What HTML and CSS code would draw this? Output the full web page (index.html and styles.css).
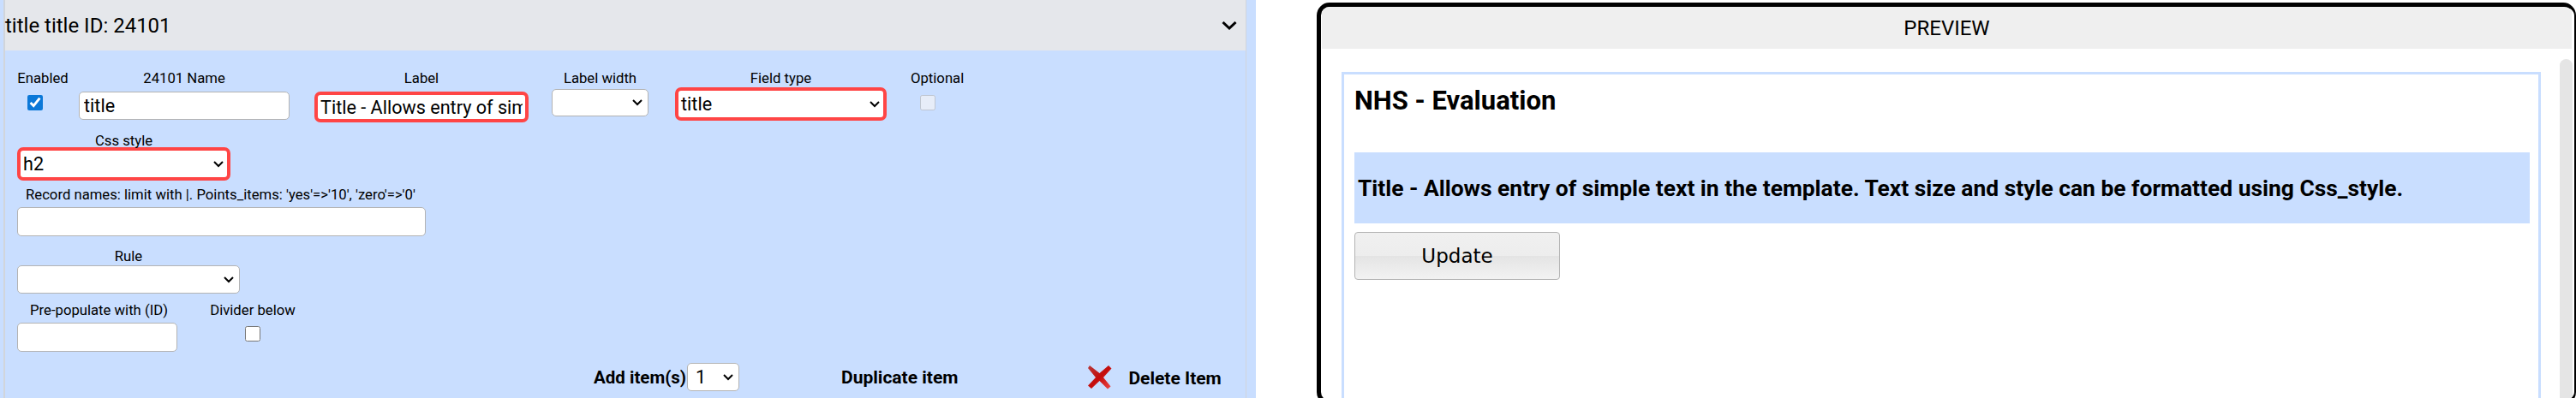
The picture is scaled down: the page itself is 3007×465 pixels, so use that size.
FILE: index.html
```html
<!DOCTYPE html>
<html lang="en">
<head>
  <meta charset="UTF-8">
  <title>Title item preview</title>
  <link rel="stylesheet" href="styles.css">
</head>
<body>
  <div class="page">
    <!-- Item editor -->
    <section class="editor">
      <div class="panel">
        <div class="editor-head">
          <span>title title ID: 24101</span>
          <svg class="head-chevron" viewBox="0 0 18 10"><path d="M1.5 1l7.5 7 7.5-7" fill="none" stroke="#000" stroke-width="3"/></svg>
        </div>
        <div class="editor-body">
          <div class="row row-first">
            <div class="field field-enabled">
              <label>Enabled</label>
              <input type="checkbox" class="check" checked>
            </div>
            <div class="field field-name">
              <label>24101 Name</label>
              <input type="text" class="box box-name" value="title">
            </div>
            <div class="field field-label">
              <label>Label</label>
              <input type="text" class="box box-label hot" value="Title - Allows entry of simple text in the template.">
            </div>
            <div class="field field-width">
              <label>Label width</label>
              <div class="box box-width pick"><span></span><svg class="chev" viewBox="0 0 12 8"><path d="M1 1l5 5 5-5" fill="none" stroke="#000" stroke-width="2"/></svg></div>
            </div>
            <div class="field field-type">
              <label>Field type</label>
              <div class="box box-type pick hot"><span>title</span><svg class="chev" viewBox="0 0 12 8"><path d="M1 1l5 5 5-5" fill="none" stroke="#000" stroke-width="2"/></svg></div>
            </div>
            <div class="field field-optional">
              <label>Optional</label>
              <input type="checkbox" class="check" disabled>
            </div>
          </div>
          <div class="field field-css">
            <label>Css style</label>
            <div class="box box-css pick hot"><span>h2</span><svg class="chev" viewBox="0 0 12 8"><path d="M1 1l5 5 5-5" fill="none" stroke="#000" stroke-width="2"/></svg></div>
          </div>
          <div class="field field-record">
            <label>Record names: limit with |. Points_items: 'yes'=&gt;'10', 'zero'=&gt;'0'</label>
            <input type="text" class="box box-record">
          </div>
          <div class="field field-rule">
            <label>Rule</label>
            <div class="box box-rule pick"><span></span><svg class="chev" viewBox="0 0 12 8"><path d="M1 1l5 5 5-5" fill="none" stroke="#000" stroke-width="2"/></svg></div>
          </div>
          <div class="row row-pre">
            <div class="field field-pre">
              <label>Pre-populate with (ID)</label>
              <input type="text" class="box box-pre">
            </div>
            <div class="field field-divider">
              <label>Divider below</label>
              <input type="checkbox" class="check">
            </div>
          </div>
          <div class="actions">
            <div class="add-items">
              <b>Add item(s)</b>
              <div class="box box-count pick"><span>1</span><svg class="chev" viewBox="0 0 12 8"><path d="M1 1l5 5 5-5" fill="none" stroke="#000" stroke-width="2"/></svg></div>
            </div>
            <b class="dup">Duplicate item</b>
            <div class="del">
              <svg class="del-icon" viewBox="0 0 29 29">
                <defs>
                  <linearGradient id="delRed" x1="0" y1="0" x2="1" y2="1">
                    <stop offset="0" stop-color="#b83a3a"/>
                    <stop offset="0.5" stop-color="#c40c0c"/>
                    <stop offset="1" stop-color="#ef4a4a"/>
                  </linearGradient>
                </defs>
                <path d="M3 1l11.500 9L25 1l3.500 3.500L19 15l8.500 10.500L24 28.500 14.500 19 5 28 1 24.500 10 15 1 4z" fill="url(#delRed)"/>
              </svg>
              <b>Delete Item</b>
            </div>
          </div>
        </div>
      </div>
    </section>

    <!-- Preview frame -->
    <section class="preview">
      <div class="preview-head">PREVIEW</div>
      <div class="preview-scroll">
        <div class="preview-inner">
          <h2 class="sheet-title">NHS - Evaluation</h2>
          <div class="band">Title - Allows entry of simple text in the template. Text size and style can be formatted using Css_style.</div>
          <button class="update">Update</button>
        </div>
        <div class="scrollbar"></div>
      </div>
    </section>
  </div>
</body>
</html>
```

FILE: styles.css
```css
html, body {
  margin: 0;
  padding: 0;
  height: 100%;
  background: #fff;
  overflow: hidden;
}
body {
  font-family: Roboto, sans-serif;
  color: #000;
}
.page {
  display: flex;
  width: 3007px;
  height: 465px;
  overflow: hidden;
}
/* Editor on the left */
.editor {
  width: 1462px;
  height: 465px;
  flex: none;
  padding-left: 4px;
  background: #c9deff;
}
.panel {
  width: 1448px;
  height: 465px;
  border-left: 2px solid #d1d5db;
  border-right: 1px solid #d1d5db;
}
.editor-head {
  height: 59px;
  background: #e5e7eb;
  display: flex;
  align-items: center;
  justify-content: space-between;
  font-size: 24px;
  padding-right: 10px;
}
.head-chevron {
  width: 18px;
  height: 10px;
}
.editor-body {
  padding: 23px 0 0 14px;
  font-size: 16.7px;
}
.field label {
  display: block;
  text-align: center;
  line-height: 20px;
  white-space: nowrap;
}
.row {
  display: flex;
}
.row-first {
  height: 73px;
}
.box {
  display: block;
  box-sizing: border-box;
  margin: 0;
  background: #fff;
  border: 1px solid #b3b3b3;
  border-radius: 5px;
  font-family: Roboto, sans-serif;
  font-size: 21.6px;
  color: #000;
  padding: 0 5px;
}
.hot {
  border: 4px solid #ff4545;
  border-radius: 7px;
  padding: 0 3px;
}
.pick {
  display: flex;
  align-items: center;
  justify-content: space-between;
}
.chev {
  width: 12px;
  height: 8px;
  margin-right: 1px;
}
.check {
  display: block;
  width: 18px;
  height: 18px;
  margin: 9px 0 0;
  accent-color: #0b78d8;
}
.field-enabled { width: 60px; }
.field-enabled .check { margin-left: 12px; }
.field-name { width: 246px; margin-left: 12px; }
.box-name { width: 246px; height: 33px; margin-top: 5px; }
.field-label { width: 250px; margin-left: 29px; }
.box-label { width: 250px; height: 36px; margin-top: 5px; }
.field-width { width: 113px; margin-left: 27px; }
.box-width { width: 113px; height: 32px; margin-top: 2px; }
.field-type { width: 247px; margin-left: 31px; }
.box-type { width: 247px; height: 39px; }
.field-optional { width: 62px; margin-left: 28px; }
.field-optional .check { margin-left: 11px; }
.field-css { width: 249px; }
.box-css { width: 249px; height: 39px; margin-top: -3px; }
.field-record { margin-top: 7px; }
.field-record label { text-align: left; padding-left: 10px; }
.box-record { width: 477px; height: 34px; margin-top: 4px; }
.field-rule { width: 260px; margin-top: 14px; }
.box-rule { width: 260px; height: 33px; }
.row-pre { margin-top: 10px; }
.field-pre { width: 187px; padding-left: 2px; }
.box-pre { width: 187px; height: 34px; margin: 4px 0 0 -2px; }
.field-divider { margin-left: 36px; width: 100px; }
.field-divider .check { margin: 8px 0 0 41px; }
.actions {
  display: flex;
  align-items: center;
  margin: 13px 0 0 673px;
  font-size: 21px;
}
.add-items {
  display: flex;
  align-items: center;
  gap: 1px;
}
.add-items b {
  font-size: 20.5px;
}
.box-count { width: 61px; height: 33px; padding-left: 9px; }
.dup { margin-left: 119px; }
.del {
  display: flex;
  align-items: center;
  margin-left: 151px;
  gap: 19px;
}
.del b {
  margin-top: 2px;
}
.del-icon {
  width: 29px;
  height: 29px;
  filter: blur(0.5px);
}
/* Preview frame on the right */
.preview {
  width: 1470px;
  height: 470px;
  flex: none;
  margin: 3px 0 0 71px;
  box-sizing: border-box;
  border: 5px solid #000;
  border-right-width: 2px;
  border-radius: 15px;
  overflow: hidden;
}
.preview-head {
  height: 49px;
  margin: 0 3px 0 1px;
  background: #efefef;
  display: flex;
  align-items: center;
  justify-content: center;
  font-size: 24px;
}
.preview-scroll {
  display: flex;
  padding: 27px 0 0 24px;
}
.preview-inner {
  width: 1400px;
  height: 400px;
  flex: none;
  box-sizing: border-box;
  border: 3px solid #c9deff;
  padding: 0 10px 0 12px;
}
.sheet-title {
  margin: 0;
  height: 91px;
  font-size: 31px;
  font-weight: 700;
  line-height: 62px;
}
.band {
  height: 83px;
  background: #c9deff;
  display: flex;
  align-items: center;
  padding-left: 4px;
  font-size: 26.4px;
  font-weight: 700;
}
.update {
  display: block;
  width: 240px;
  height: 56px;
  margin-top: 10px;
  border: 1px solid #b3b3b3;
  border-radius: 4px;
  background: linear-gradient(#f0f0f0 0%, #ededed 50%, #e4e4e4 50%, #f2f2f2 100%);
  font-family: "DejaVu Sans", sans-serif;
  font-size: 23px;
  color: #000;
}
.scrollbar {
  width: 15px;
  height: 400px;
  margin: -15px 0 0 22px;
  border-radius: 8px 8px 0 0;
  background: #e5e5e5;
}
```
